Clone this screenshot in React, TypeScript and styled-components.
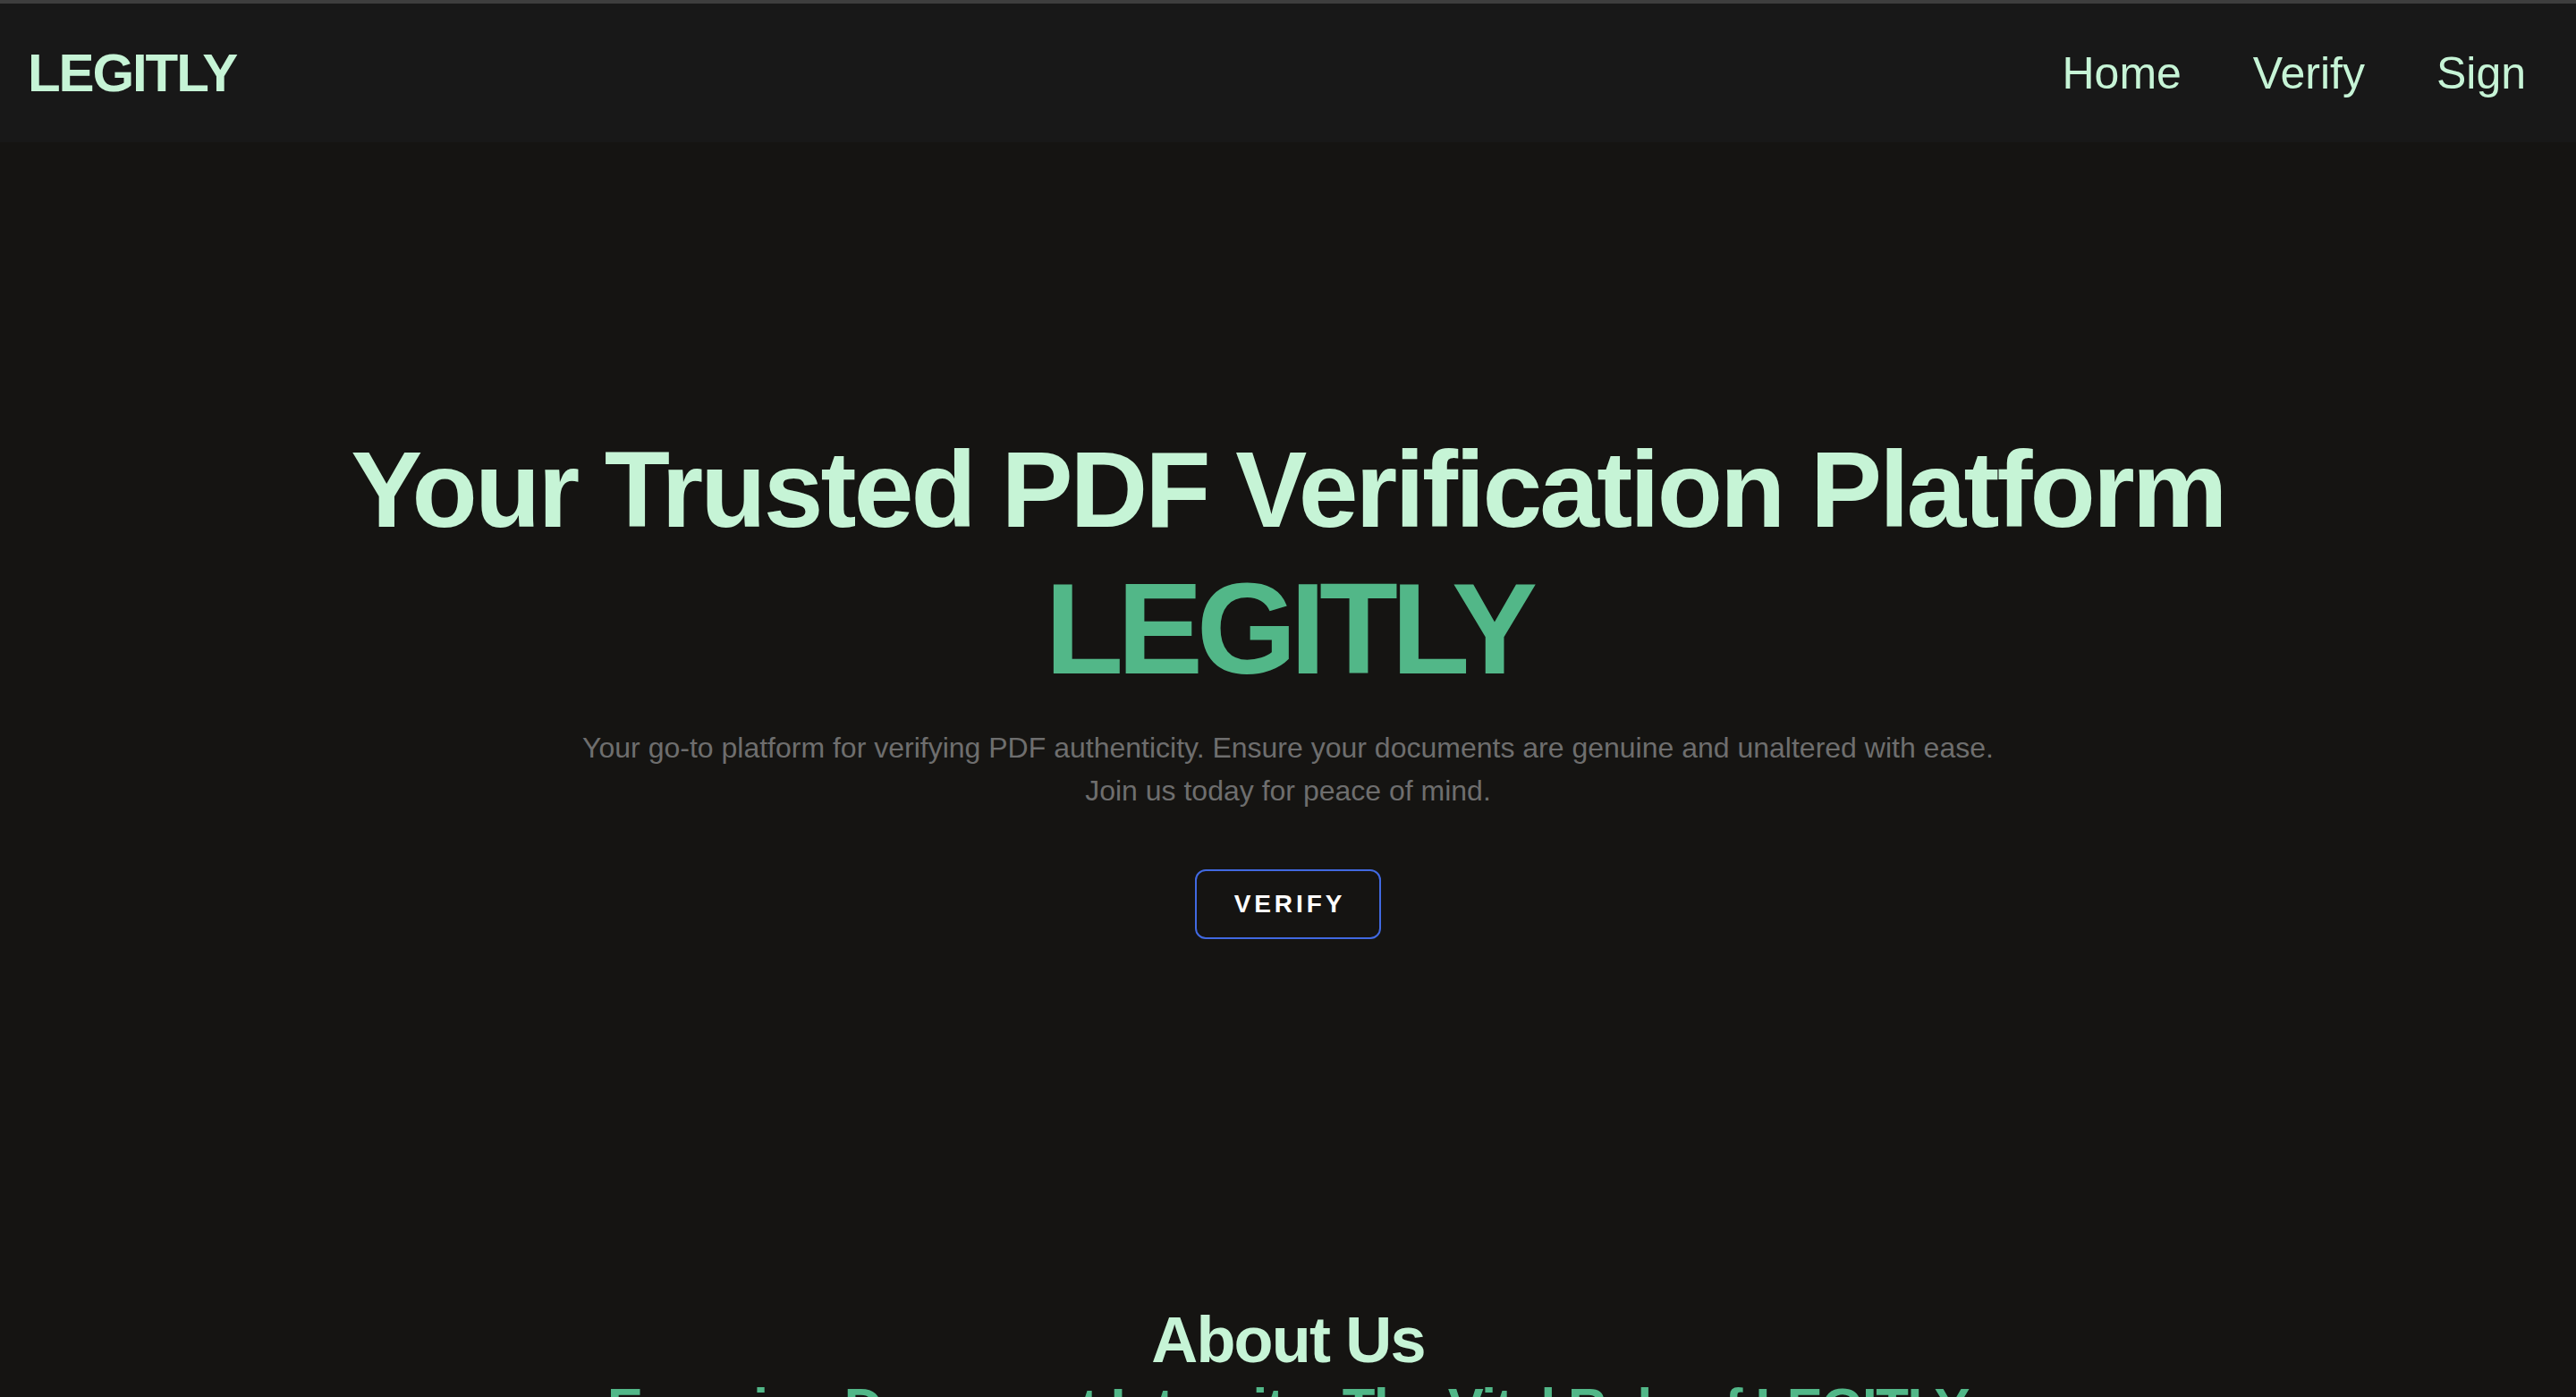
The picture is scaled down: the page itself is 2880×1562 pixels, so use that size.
import React from "react";
import styled, { createGlobalStyle } from "styled-components";

const GlobalStyle = createGlobalStyle`
  html, body {
    margin: 0;
    padding: 0;
    background: #151412;
    font-family: "Liberation Sans", Arial, Helvetica, sans-serif;
  }
  * { box-sizing: border-box; }
`;

const Page = styled.div`
  min-height: 100vh;
  background: #151412;
  border-top: 4px solid #3e3e3e;
`;

const Header = styled.header`
  height: 155px;
  background: #181818;
  display: flex;
  align-items: center;
  justify-content: space-between;
  padding: 0 56px 0 31px;
`;

const Logo = styled.div`
  font-size: 60px;
  font-weight: 700;
  letter-spacing: -0.035em;
  color: #c6f4d6;
`;

const Nav = styled.nav`
  display: flex;
  align-items: center;
  gap: 80px;
`;

const NavLink = styled.a`
  font-size: 50px;
  color: #c6f4d6;
  text-decoration: none;
  cursor: pointer;
`;

const Hero = styled.section`
  display: flex;
  flex-direction: column;
  align-items: center;
  padding-top: 328px;
  text-align: center;
`;

const Title = styled.h1`
  margin: 0;
  font-size: 120px;
  line-height: 120px;
  font-weight: 700;
  letter-spacing: -0.024em;
  color: #c6f4d6;
`;

const Brand = styled.div`
  margin-top: 25px;
  font-size: 144px;
  line-height: 144px;
  font-weight: 700;
  letter-spacing: -0.051em;
  color: #52b788;
`;

const Subtitle = styled.p`
  margin: 36px 0 0;
  font-size: 32px;
  line-height: 48px;
  color: #6e6e6e;
`;

const VerifyButton = styled.button`
  margin-top: 64px;
  width: 208px;
  height: 78px;
  border: 2px solid #4169e1;
  border-radius: 12px;
  background: transparent;
  color: #ffffff;
  font-family: inherit;
  font-size: 28px;
  font-weight: 700;
  letter-spacing: 0.14em;
  padding: 0 0 0 0.14em;
  cursor: pointer;
`;

const About = styled.section`
  display: flex;
  flex-direction: column;
  align-items: center;
  padding-top: 408px;
  text-align: center;
`;

const AboutTitle = styled.h2`
  margin: 0;
  font-size: 72px;
  line-height: 80px;
  font-weight: 700;
  letter-spacing: -0.025em;
  color: #c6f4d6;
`;

const AboutSubtitle = styled.h3`
  margin: 0;
  font-size: 60px;
  line-height: 72px;
  font-weight: 700;
  letter-spacing: -0.022em;
  color: #52b788;
`;

export default function App() {
  return (
    <>
      <GlobalStyle />
      <Page>
        <Header>
          <Logo>LEGITLY</Logo>
          <Nav>
            <NavLink>Home</NavLink>
            <NavLink>Verify</NavLink>
            <NavLink>Sign</NavLink>
          </Nav>
        </Header>
        <Hero>
          <Title>Your Trusted PDF Verification Platform</Title>
          <Brand>LEGITLY</Brand>
          <Subtitle>
            Your go-to platform for verifying PDF authenticity. Ensure your documents are genuine and unaltered with ease.
            <br />
            Join us today for peace of mind.
          </Subtitle>
          <VerifyButton>VERIFY</VerifyButton>
        </Hero>
        <About>
          <AboutTitle>About Us</AboutTitle>
          <AboutSubtitle>Ensuring Document Integrity: The Vital Role of LEGITLY</AboutSubtitle>
        </About>
      </Page>
    </>
  );
}
